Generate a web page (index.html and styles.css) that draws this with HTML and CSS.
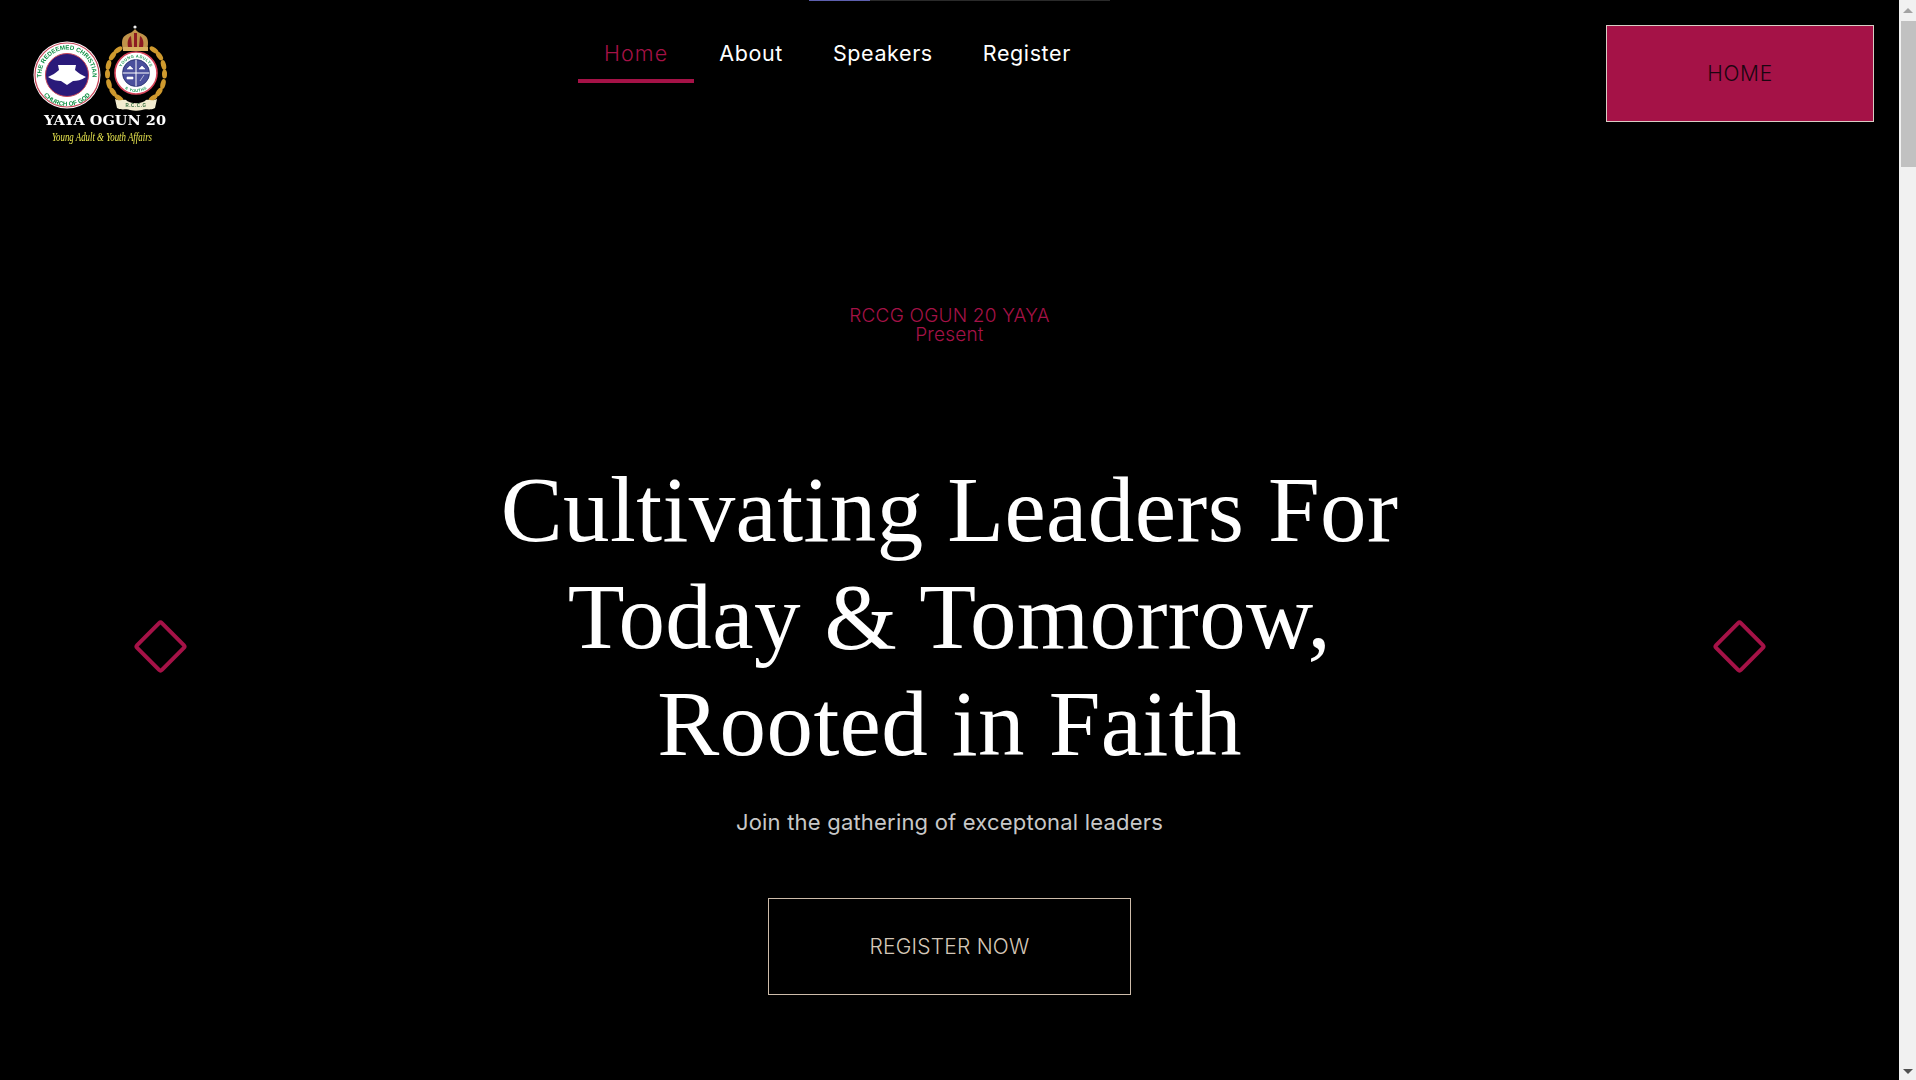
FILE: index.html
```html
<!DOCTYPE html>
<html lang="en">
<head>
<meta charset="utf-8">
<title>RCCG Ogun 20 YAYA</title>
<link rel="stylesheet" href="styles.css">
</head>
<body>
<div class="window">
  <div class="page">
    <div class="progress"><span class="progress-fill"></span></div>
    <header class="header">
      <a class="logo" href="#" aria-label="Yaya Ogun 20">
        <svg class="logo-svg" viewBox="0 0 200 160" width="200" height="160">
          <defs>
            <path id="arcTop" d="M43 83.7A25.5 25.5 0 1 1 91 83.7"/>
            <path id="arcBottom" d="M41.6 92.8A31 31 0 0 0 92.4 92.8"/>
            <path id="arcTop2" d="M120.5 73a15.5 15.5 0 0 1 31 0"/>
            <path id="arcBottom2" d="M117 73a19 19 0 0 0 38 0"/>
          </defs>
          <circle cx="67" cy="75" r="33.5" fill="#fff"/>
          <circle cx="67" cy="75" r="32" fill="none" stroke="#c8475a" stroke-width="1.2"/>
          <circle cx="67" cy="75" r="21.5" fill="#2a1a7a" stroke="#c8475a" stroke-width="1"/>
          <text class="ring-text"><textPath href="#arcTop" startOffset="50%" text-anchor="middle">THE REDEEMED CHRISTIAN</textPath></text>
          <text class="ring-text"><textPath href="#arcBottom" startOffset="50%" text-anchor="middle">CHURCH OF GOD</textPath></text>
          <path d="M58 65L76 65L75 70C78 73 82 75 86 77C81 80 77 81 73 81L70 83L67 85L64 83L61 81C57 81 53 80 48 77C52 75 56 73 59 70Z" fill="#fff"/>
          <g fill="#cf9a2e">
            <ellipse cx="118" cy="50" rx="2.5" ry="5" transform="rotate(55 118 50)"/>
            <ellipse cx="112.500" cy="56" rx="2.5" ry="5" transform="rotate(35 112.500 56)"/>
            <ellipse cx="108.500" cy="65" rx="2.5" ry="5" transform="rotate(15 108.500 65)"/>
            <ellipse cx="107.500" cy="74" rx="2.5" ry="4.500"/>
            <ellipse cx="109" cy="84" rx="2.5" ry="5" transform="rotate(-15 109 84)"/>
            <ellipse cx="113" cy="92" rx="2.5" ry="5" transform="rotate(-35 113 92)"/>
            <ellipse cx="119" cy="98" rx="2.5" ry="5" transform="rotate(-55 119 98)"/>
            <ellipse cx="154" cy="50" rx="2.5" ry="5" transform="rotate(-55 154 50)"/>
            <ellipse cx="159.500" cy="56" rx="2.5" ry="5" transform="rotate(-35 159.500 56)"/>
            <ellipse cx="163.500" cy="65" rx="2.5" ry="5" transform="rotate(-15 163.500 65)"/>
            <ellipse cx="164.500" cy="74" rx="2.5" ry="4.500"/>
            <ellipse cx="163" cy="84" rx="2.5" ry="5" transform="rotate(15 163 84)"/>
            <ellipse cx="159" cy="92" rx="2.5" ry="5" transform="rotate(35 159 92)"/>
            <ellipse cx="153" cy="98" rx="2.5" ry="5" transform="rotate(55 153 98)"/>
          </g>
          <path d="M123 50c-2-8-1-13 3-15 3-2 6-2 9-6 3 4 6 4 9 6 4 2 5 7 3 15z" fill="#c0934a"/>
          <path d="M128 47c-1-5 0-9 3-11l1 11zM134 47v-14h3v14zM139 47l1-11c3 2 4 6 3 11z" fill="#8c1a22"/>
          <path d="M123 47h25v4h-25z" fill="#d9b060"/>
          <circle cx="135" cy="27" r="1.6" fill="#eee"/>
          <circle cx="136" cy="73" r="21" fill="#fff" stroke="#d8465c" stroke-width="1.6"/>
          <circle cx="136" cy="73" r="13.5" fill="#4a4f9c" stroke="#222a6a" stroke-width=".8"/>
          <path d="M136 59.500v27M122.500 73h27" stroke="#fff" stroke-width="1"/>
          <path d="M127 69l3-3 3 3zM139 69l3-3 3 3zM127 79h6v-2h-6zM140 81l4-6" fill="#fff" stroke="#fff" stroke-width=".6"/>
          <text class="ring-text small"><textPath href="#arcTop2" startOffset="50%" text-anchor="middle">YOUNG ADULTS</textPath></text>
          <text class="ring-text small"><textPath href="#arcBottom2" startOffset="50%" text-anchor="middle">&amp; YOUTHS</textPath></text>
          <path d="M115 99c6 3 10-1 12 2 6 3 12 3 18 0 2-3 6 1 12-2l-2 9c-6 3-9 0-13 2-4 1-8 1-12 0-4-2-7 1-13-2z" fill="#f3ecd0"/>
          <text class="ribbon-text" x="136" y="107" text-anchor="middle">R.C.C.G</text>
          <text class="logo-title" x="44" y="125" textLength="122" lengthAdjust="spacingAndGlyphs">YAYA OGUN 20</text>
          <text class="logo-tag" x="52" y="141" textLength="100" lengthAdjust="spacingAndGlyphs">Young Adult &amp; Youth Affairs</text>
        </svg>
      </a>
      <nav class="nav">
        <a class="nav-link is-active" href="#">Home</a>
        <a class="nav-link" href="#">About</a>
        <a class="nav-link" href="#">Speakers</a>
        <a class="nav-link" href="#">Register</a>
      </nav>
      <a class="home-btn" href="#">HOME</a>
    </header>
    <main class="hero">
      <button class="arrow" aria-label="Previous"><span class="diamond"></span></button>
      <div class="hero-copy">
        <p class="eyebrow">RCCG OGUN 20 YAYA<br>Present</p>
        <h1 class="title">Cultivating Leaders For<br>Today &amp; Tomorrow,<br>Rooted in Faith</h1>
        <p class="subtitle">Join the gathering of exceptonal leaders</p>
        <a class="register-btn" href="#">REGISTER NOW</a>
      </div>
      <button class="arrow" aria-label="Next"><span class="diamond"></span></button>
    </main>
  </div>
  <aside class="scrollbar" aria-hidden="true">
    <span class="scroll-up"></span>
    <span class="scroll-thumb"></span>
    <span class="scroll-down"></span>
  </aside>
</div>
</body>
</html>
```
FILE: styles.css
```css
* { box-sizing: border-box; }
html, body { margin: 0; height: 100%; overflow: hidden; background: #000; }
body { font-family: Inter, "Noto Sans", sans-serif; color: #fff; }
a { text-decoration: none; color: inherit; }

.window { display: flex; height: 1080px; }
.page { position: relative; flex: 1; min-width: 0; background: #000; }

.progress { position: absolute; top: 0; left: 809px; width: 301px; height: 1px; background: #2a2a2a; }
.progress-fill { display: block; width: 61px; height: 1px; background: #5d5fae; }

.header { display: flex; align-items: flex-start; height: 146px; }
.logo { display: block; flex: none; width: 200px; height: 146px; overflow: hidden; }
.logo-svg { display: block; filter: blur(.3px); }
.ring-text { font: 700 6.2px "Liberation Sans", sans-serif; fill: #0f9145; }
.ring-text.small { font-size: 4px; letter-spacing: .4px; fill: #1f9a55; }
.ribbon-text { font: 700 4.5px "Liberation Sans", sans-serif; fill: #2f6b3a; letter-spacing: .6px; }
.logo-title { font: 700 12px "DejaVu Serif", serif; fill: #fff; }
.logo-tag { font: italic 400 13px "Liberation Serif", serif; fill: #ecea50; }

.nav { display: flex; margin-left: 378px; padding-top: 25px; }
.nav-link { display: flex; align-items: center; height: 58px; padding: 4px 25px 0; font-size: 21.5px; font-weight: 400; line-height: 1; letter-spacing: .6px; border-bottom: 4px solid transparent; }
.nav-link.is-active { padding: 4px 26px 0; color: #a51247; border-bottom-color: #a51247; font-weight: 300; letter-spacing: 1.1px; }

.home-btn { display: flex; align-items: center; justify-content: center; width: 268px; height: 97px; margin: 25px 25px 0 auto; background: #a51247; border: 1px solid #d9ccc4; color: #1a0510; font-size: 21px; font-weight: 300; letter-spacing: .7px; }

.hero { display: grid; grid-template-columns: 320px 1fr 320px; height: 934px; }
.arrow { align-self: start; justify-self: center; display: flex; margin: 479px 0 0; padding: 0; background: none; border: 0; }
.diamond { display: block; width: 39px; height: 39px; margin: 2px; border: 4.500px solid #a51247; border-radius: 4px; transform: rotate(45deg); }

.hero-copy { display: flex; flex-direction: column; align-items: center; text-align: center; }
.eyebrow { margin: 161px 0 0; font-size: 19px; font-weight: 300; line-height: 18.5px; letter-spacing: .2px; color: #a51247; }
.title { margin: 112px 0 0; font: 400 93px/107px "Liberation Serif", serif; letter-spacing: .4px; color: #fff; white-space: nowrap; }
.subtitle { margin: 31px 0 0; font-size: 22px; font-weight: 400; line-height: 28px; letter-spacing: .2px; color: #c8c8c8; }
.register-btn { display: flex; align-items: center; justify-content: center; width: 363px; height: 97px; margin-top: 62px; border: 1px solid #cdbcaa; color: #d5c8b8; font-size: 21px; font-weight: 300; letter-spacing: .2px; }

.scrollbar { flex: none; display: flex; flex-direction: column; align-items: flex-end; width: 17px; height: 1080px; background: #f1f1f1; }
.scroll-up, .scroll-down { flex: none; display: block; width: 0; height: 0; margin: 8px 3px 0 0; border-left: 5px solid transparent; border-right: 5px solid transparent; }
.scroll-up { border-bottom: 5px solid #a3a3a3; }
.scroll-thumb { flex: none; display: block; width: 15px; height: 146px; margin-top: 8px; background: #c1c1c1; }
.scroll-down { margin-top: auto; margin-bottom: 6px; border-top: 5px solid #505050; }
```
